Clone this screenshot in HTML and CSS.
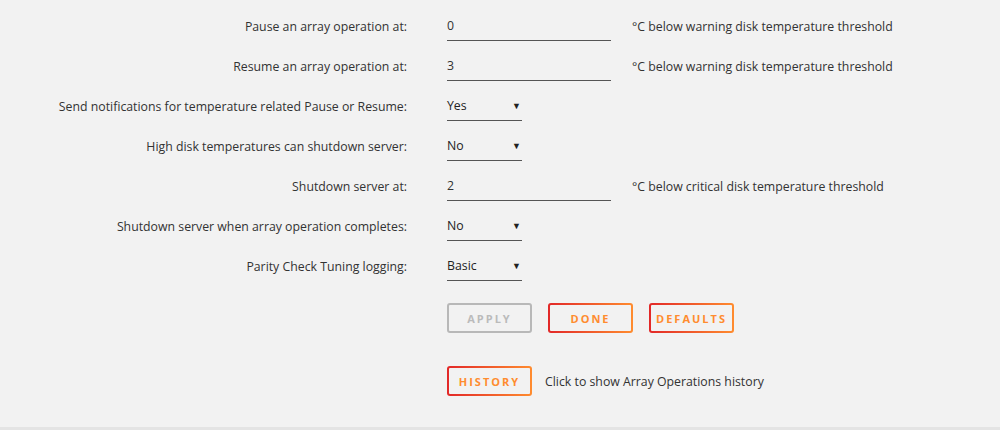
FILE: index.html
```html
<!DOCTYPE html>
<html lang="en">
<head>
    <meta charset="UTF-8">
    <meta name="viewport" content="width=device-width, initial-scale=1.0">
    <title>Parity Check Tuning</title>
    <link rel="stylesheet" href="styles.css">
</head>
<body>
    <form class="settings">
        <div class="row">
            <label class="label">Pause an array operation at:</label>
            <div class="field">
                <input class="text-input" type="text" value="0">
                <span class="hint">°C below warning disk temperature threshold</span>
            </div>
        </div>
        <div class="row">
            <label class="label">Resume an array operation at:</label>
            <div class="field">
                <input class="text-input" type="text" value="3">
                <span class="hint">°C below warning disk temperature threshold</span>
            </div>
        </div>
        <div class="row">
            <label class="label">Send notifications for temperature related Pause or Resume:</label>
            <div class="field">
                <div class="select"><span>Yes</span><span class="caret">▼</span></div>
            </div>
        </div>
        <div class="row">
            <label class="label">High disk temperatures can shutdown server:</label>
            <div class="field">
                <div class="select"><span>No</span><span class="caret">▼</span></div>
            </div>
        </div>
        <div class="row">
            <label class="label">Shutdown server at:</label>
            <div class="field">
                <input class="text-input" type="text" value="2">
                <span class="hint">°C below critical disk temperature threshold</span>
            </div>
        </div>
        <div class="row">
            <label class="label">Shutdown server when array operation completes:</label>
            <div class="field">
                <div class="select"><span>No</span><span class="caret">▼</span></div>
            </div>
        </div>
        <div class="row">
            <label class="label">Parity Check Tuning logging:</label>
            <div class="field">
                <div class="select"><span>Basic</span><span class="caret">▼</span></div>
            </div>
        </div>

        <div class="actions">
            <button type="button" class="btn disabled">Apply</button>
            <button type="button" class="btn">Done</button>
            <button type="button" class="btn">Defaults</button>
        </div>

        <div class="history">
            <button type="button" class="btn">History</button>
            <span class="history-text">Click to show Array Operations history</span>
        </div>
    </form>
    <div class="footer-line"></div>
</body>
</html>
```

FILE: styles.css
```css
body {
    font-family: "Open Sans", "Noto Sans", sans-serif;
    font-size: 12.3px;
    color: #333;
    margin: 0;
    background-color: #f2f2f2;
    height: 430px;
    display: flex;
    flex-direction: column;
}
.settings {
    flex: 1;
    padding-top: 6px;
}
.row {
    display: flex;
    align-items: center;
    height: 40px;
}
.label {
    width: 407px;
    text-align: right;
    flex-shrink: 0;
}
.field {
    display: flex;
    align-items: center;
    margin-left: 40px;
}
.text-input {
    width: 164px;
    height: 30px;
    box-sizing: border-box;
    border: none;
    border-bottom: 1px solid #555;
    background: transparent;
    font: inherit;
    color: #333;
    padding: 0;
    outline: none;
}
.hint {
    margin-left: 21px;
}
.select {
    width: 75px;
    height: 30px;
    box-sizing: border-box;
    border-bottom: 1px solid #555;
    display: flex;
    align-items: center;
    justify-content: space-between;
    color: #222;
    font-weight: 500;
}
.caret {
    font-size: 9px;
    margin-right: 1px;
    color: #222;
}
.actions {
    display: flex;
    gap: 16px;
    margin-left: 447px;
    margin-top: 17px;
}
.history {
    display: flex;
    align-items: center;
    margin-left: 447px;
    margin-top: 33px;
}
.history-text {
    margin-left: 13px;
}
.btn {
    width: 85px;
    height: 30px;
    border: 2px solid transparent;
    border-radius: 3px;
    background:
        linear-gradient(#f2f2f2, #f2f2f2) padding-box,
        linear-gradient(90deg, #e22828, #ff8c2f) border-box;
    color: #ff8c2f;
    font-family: inherit;
    font-size: 11px;
    font-weight: 700;
    letter-spacing: 2px;
    text-transform: uppercase;
    padding: 0;
    cursor: pointer;
}
.btn.disabled {
    background: #f2f2f2;
    border-color: #b8b8b8;
    color: #bbb;
    cursor: default;
}
.footer-line {
    height: 3px;
    background-color: #e4e4e4;
}
```
